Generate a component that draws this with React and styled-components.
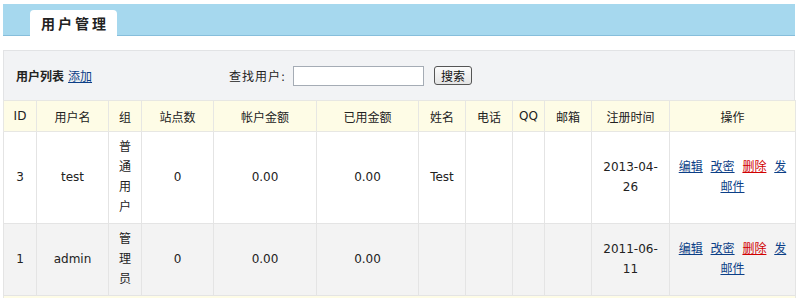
import styled, { createGlobalStyle } from 'styled-components'

const Global = createGlobalStyle`
body{
  margin:0;
  background:#fff;
  font-family:"DejaVu Sans","Noto Sans CJK SC",sans-serif;
  font-size:12px;
  color:#222;
}
`

const Page = styled.div`
padding:4px 3px 0 3px;
`

const TitleBar = styled.div`
height:31px;
background:#a6d8ee;
border-bottom:1px solid #86bedb;
display:flex;
align-items:flex-end;
padding-left:27px;
`

const Tab = styled.div`
width:87px;
height:26px;
background:#fff;
border-radius:4px 4px 0 0;
display:flex;
align-items:center;
justify-content:center;
font-size:14px;
font-weight:bold;
letter-spacing:3px;
text-indent:3px;
margin-bottom:-1px;
`

const Panel = styled.div`
margin-top:14px;
background:#f2f3f5;
border:1px solid #e2e3e5;
border-bottom:none;
`

const Toolbar = styled.div`
height:49px;
display:flex;
align-items:center;
padding-left:12px;
`

const ListTitle = styled.span`
font-weight:bold;
margin-right:4px;
`

const Link = styled.a`
color:${p => (p.$danger ? '#d10000' : '#0c3f87')};
text-decoration:underline;
cursor:pointer;
`

const Search = styled.div`
margin-left:137px;
display:flex;
align-items:center;
letter-spacing:1px;
`

const Input = styled.input`
margin-left:7px;
width:127px;
height:16px;
border:1px solid #a5acb5;
background:#fff;
padding:1px;
`

const Button = styled.button`
margin-left:10px;
height:19px;
width:38px;
padding:0;
font-family:inherit;
font-size:12px;
color:#111;
background:linear-gradient(#fbfbfb,#e4e4e4);
border:1px solid #555;
border-radius:3px;
`

const Table = styled.table`
table-layout:fixed;
border-collapse:collapse;
margin-left:-1px;
width:calc(100% + 1px);
`

const Th = styled.th`
height:30px;
padding:0 5px;
font-weight:normal;
background:#fefce6;
border:1px solid #e7e7e3;
text-align:center;
`

const Td = styled.td`
padding:5px 5px 6px;
line-height:20px;
text-align:center;
border:1px solid #e4e4e4;
background:${p => (p.$alt ? '#f3f3f3' : '#fff')};
`

const Actions = styled(Td)`
word-spacing:4px;
`

const Foot = styled.td`
height:6px;
padding:0;
background:#fefce6;
border:1px solid #e7e7e3;
`

const widths = [33, 72, 33, 72, 103, 102, 47, 47, 32, 47, 78, 126]
const heads = ['ID', '用户名', '组', '站点数', '帐户金额', '已用金额', '姓名', '电话', 'QQ', '邮箱', '注册时间', '操作']

const users = [
  { id: 3, name: 'test', group: '普通用户', sites: 0, balance: '0.00', used: '0.00', real: 'Test', date: '2013-04-26' },
  { id: 1, name: 'admin', group: '管理员', sites: 0, balance: '0.00', used: '0.00', real: '', date: '2011-06-11' },
]

export default function App() {
  return (
    <Page>
      <Global />
      <TitleBar>
        <Tab>用户管理</Tab>
      </TitleBar>
      <Panel>
        <Toolbar>
          <ListTitle>用户列表</ListTitle>
          <Link>添加</Link>
          <Search>
            查找用户:
            <Input />
            <Button>搜索</Button>
          </Search>
        </Toolbar>
        <Table>
          <colgroup>
            {widths.map((w, i) => <col key={i} style={{ width: w }} />)}
          </colgroup>
          <thead>
            <tr>{heads.map(h => <Th key={h}>{h}</Th>)}</tr>
          </thead>
          <tbody>
            {users.map((u, i) => (
              <tr key={u.id}>
                <Td $alt={i % 2}>{u.id}</Td>
                <Td $alt={i % 2}>{u.name}</Td>
                <Td $alt={i % 2}>{u.group}</Td>
                <Td $alt={i % 2}>{u.sites}</Td>
                <Td $alt={i % 2}>{u.balance}</Td>
                <Td $alt={i % 2}>{u.used}</Td>
                <Td $alt={i % 2}>{u.real}</Td>
                <Td $alt={i % 2}></Td>
                <Td $alt={i % 2}></Td>
                <Td $alt={i % 2}></Td>
                <Td $alt={i % 2}>{u.date}</Td>
                <Actions $alt={i % 2}>
                  <Link>编辑</Link> <Link>改密</Link> <Link $danger>删除</Link> <Link>发邮件</Link>
                </Actions>
              </tr>
            ))}
            <tr><Foot colSpan={12} /></tr>
          </tbody>
        </Table>
      </Panel>
    </Page>
  )
}
